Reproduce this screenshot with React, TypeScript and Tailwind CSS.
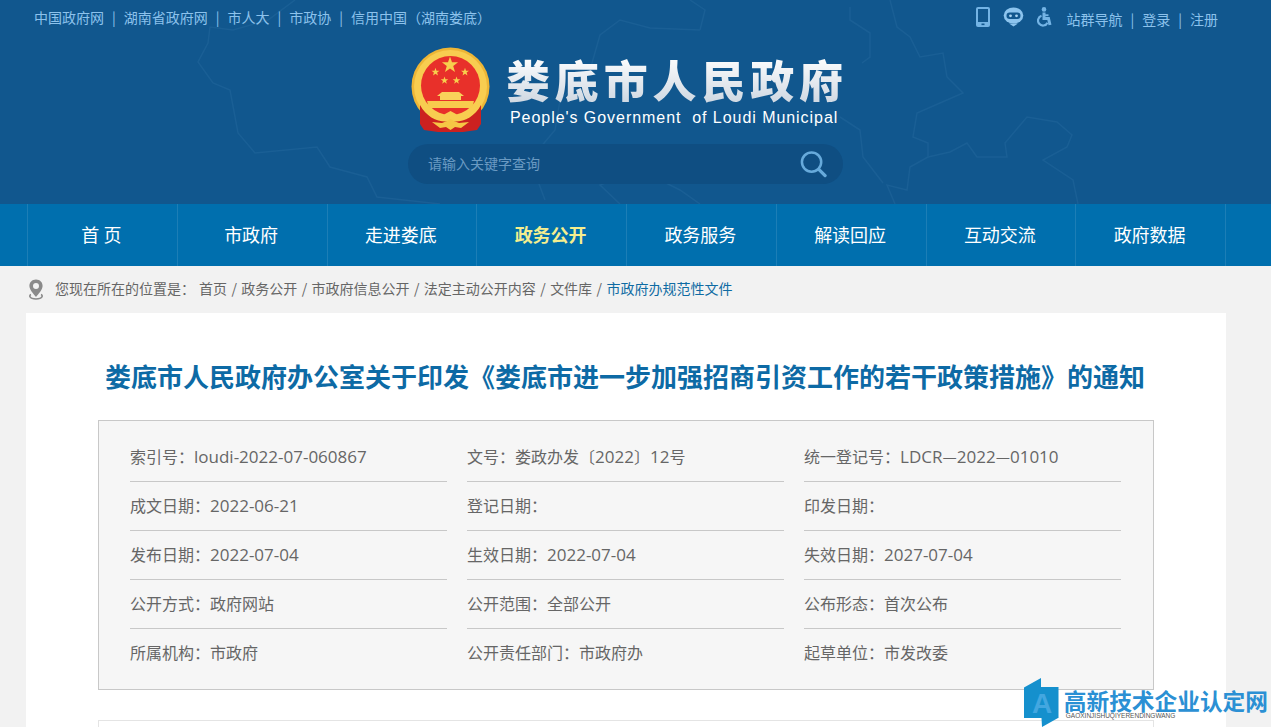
import React from 'react';

const cjk = { fontFamily: '"Noto Sans CJK SC", "Noto Sans", sans-serif' };

const navItems = ['首 页', '市政府', '走进娄底', '政务公开', '政务服务', '解读回应', '互动交流', '政府数据'];

const crumbs = ['首页', '政务公开', '市政府信息公开', '法定主动公开内容', '文件库'];

const leftLinks = ['中国政府网', '湖南省政府网', '市人大', '市政协', '信用中国（湖南娄底）'];
const rightLinks = ['站群导航', '登录', '注册'];

const infoRows = [
  ['索引号：loudi-2022-07-060867', '文号：娄政办发〔2022〕12号', '统一登记号：LDCR—2022—01010'],
  ['成文日期：2022-06-21', '登记日期：', '印发日期：'],
  ['发布日期：2022-07-04', '生效日期：2022-07-04', '失效日期：2027-07-04'],
  ['公开方式：政府网站', '公开范围：全部公开', '公布形态：首次公布'],
  ['所属机构：市政府', '公开责任部门：市政府办', '起草单位：市发改委'],
];

function Star({ x, y, r, fill = '#f7cf4d' }: { x: number; y: number; r: number; fill?: string }) {
  const points = Array.from({ length: 10 }, (_, i) => {
    const radius = i % 2 === 0 ? r : r * 0.4;
    const angle = (Math.PI / 5) * i - Math.PI / 2;
    return `${x + radius * Math.cos(angle)},${y + radius * Math.sin(angle)}`;
  }).join(' ');
  return <polygon points={points} fill={fill} />;
}

function Emblem() {
  return (
    <svg width="80" height="85" viewBox="0 0 80 85" className="shrink-0">
      <circle cx="39.5" cy="39.5" r="39" fill="#eeb636" />
      <circle cx="39.5" cy="39.5" r="36.5" fill="#f8cd50" />
      <circle cx="39.5" cy="38.5" r="29.5" fill="#e8302a" />
      <Star x={39} y={18} r={8.5} />
      <Star x={24.5} y={25} r={4.2} />
      <Star x={54} y={25} r={4.2} />
      <Star x={33.5} y={33.5} r={4} />
      <Star x={45.5} y={33.5} r={4} />
      <path d="M31 45 L48 45 L53 49 L50 49 L50 53 L29 53 L29 49 L26 49 Z" fill="#f9d25a" />
      <path d="M16 54 L63 54 L61 61 L18 61 Z" fill="#f8cb4d" />
      <path d="M9 58 C16 71 28 76 39.5 74 C51 76 63 71 70 58 L70 77 L66 83 L52 85 L27 85 L13 83 L9 77 Z" fill="#cc2120" />
      <path d="M29 71 L34 67 L39.5 64 L45 67 L50 71 L45 73 L39.5 71 L34 73 Z" fill="#f8cd50" />
      <path d="M21 75 L31 76 L36 74 L39.5 72 L43 74 L48 76 L58 75 L50 81 L44 80 L39.5 83 L35 80 L29 81 Z" fill="#f6c645" />
    </svg>
  );
}

function MapLines() {
  return (
    <svg className="absolute inset-0 pointer-events-none" width="1271" height="204" viewBox="0 0 1271 204" fill="none" stroke="#1a5f95" strokeWidth="1.5">
      <path d="M295 0 L268 20 L233 30 L210 27 L208 43 L198 62 L213 83 L230 90 L238 133 L255 153 L317 147 L330 167 L367 177 L377 197 L440 204" />
      <path d="M700 30 L650 28 L620 20 L600 35 L590 70 L560 100 L555 130 L530 160 L545 200" />
      <path d="M700 30 L705 10 L690 0" />
      <path d="M620 204 L600 185 L640 170 L680 190 L700 204" />
      <path d="M890 0 L897 27 L910 37 L920 57 L943 53 L947 77 L963 93 L940 103 L917 113 L913 137 L928 143 L928 157 L910 167 L907 190 L887 185 L895 204" />
      <path d="M928 157 L950 152 L967 143 L977 157 L1007 157 L1005 143 L1027 117 L1057 122 L1072 135 L1067 147 L1043 160 L1073 180 L1078 204" />
      <path d="M850 7 L850 20 L870 33 L870 57 L862 63" />
      <path d="M840 117 L860 130 L863 157 L883 183" />
    </svg>
  );
}

function PhoneIcon() {
  return (
    <svg width="14" height="20" viewBox="0 0 14 20">
      <rect width="14" height="20" rx="2" fill="#74b4e5" />
      <rect x="2" y="2" width="10" height="13" fill="#11578e" />
      <rect x="5.5" y="16.5" width="3" height="1.6" fill="#11578e" />
    </svg>
  );
}

function RobotIcon() {
  return (
    <svg width="21" height="20" viewBox="0 0 21 20">
      <ellipse cx="10.5" cy="8.5" rx="9.8" ry="8" fill="#8cc4ee" />
      <rect x="3.5" y="5.5" width="14" height="6.5" rx="3.2" fill="#11578e" />
      <circle cx="7.5" cy="8.8" r="1.4" fill="#a9d4f3" />
      <circle cx="13.5" cy="8.8" r="1.4" fill="#a9d4f3" />
      <path d="M6 16.5 L15 16.5 L10.5 19.5 Z" fill="#8cc4ee" />
    </svg>
  );
}

function WheelchairIcon() {
  return (
    <svg width="15" height="20" viewBox="0 0 15 20" fill="none" stroke="#74b4e5">
      <circle cx="7" cy="2.4" r="2.3" fill="#74b4e5" stroke="none" />
      <path d="M7 5.5 V11.5 H11.5 L13 18" strokeWidth="3" />
      <path d="M7 8.2 H11.5" strokeWidth="1.8" />
      <path d="M4.5 8.8 A5 5 0 1 0 10.5 15.8" strokeWidth="2.2" />
    </svg>
  );
}

function PinIcon() {
  return (
    <svg width="16" height="21" viewBox="0 0 16 21" fill="none">
      <path d="M3 15.5 C1 16.2 0.8 19.8 8 20 C15.2 19.8 15 16.2 13 15.5" stroke="#8a8a8a" strokeWidth="1.6" />
      <path fillRule="evenodd" d="M8 0.5 C12 0.5 14.6 3.4 14.6 7 C14.6 10.5 10.5 15 8 18 C5.5 15 1.4 10.5 1.4 7 C1.4 3.4 4 0.5 8 0.5 Z M8 4 A3 3 0 1 0 8 10 A3 3 0 1 0 8 4 Z" fill="#8a8a8a" />
    </svg>
  );
}

function Badge() {
  return (
    <div className="absolute right-[3px] bottom-0 flex h-[49px] items-end">
      <svg width="35" height="49" viewBox="0 0 35 49" className="mr-[5px]">
        <path d="M0 9.5 L17 0 L17 9 L34.5 9 L34.5 40 L34 40 L18 49 L17.5 40 L0 40 Z" fill="#1590cd" />
        <text x="18" y="35" textAnchor="middle" fontSize="28" fontWeight="700" fontFamily="Liberation Sans, sans-serif" fill="#43a7e0">
          A
        </text>
      </svg>
      <div className="mb-[7px] flex flex-col">
        <span className="text-[22.7px] leading-[20px] font-bold whitespace-nowrap text-[#2b90d4]">高新技术企业认定网</span>
        <span className="mt-[1px] ml-[2px] text-[6.5px] leading-[8px] whitespace-nowrap text-[#555] font-['Liberation_Sans',sans-serif]">
          GAOXINJISHUQIYERENDINGWANG
        </span>
      </div>
    </div>
  );
}

// 数字和英文用另一种字体，宽度才对得上
function InfoText({ text }: { text: string }) {
  const parts = text.split(/([A-Za-z0-9\-]+)/);
  return (
    <>
      {parts.map((part, i) =>
        i % 2 === 1 ? (
          <span key={i} className="text-[17px] font-['Open_Sans',sans-serif]">
            {part}
          </span>
        ) : (
          <span key={i}>{part}</span>
        ),
      )}
    </>
  );
}

function LinkRow({ links }: { links: string[] }) {
  return (
    <>
      {links.map((link, i) => (
        <React.Fragment key={link}>
          {i > 0 && <span className="w-[19.75px] text-center">|</span>}
          <span>{link}</span>
        </React.Fragment>
      ))}
    </>
  );
}

export default function App() {
  return (
    <div className="relative h-[727px] w-[1271px] overflow-hidden bg-[#f2f2f2]" style={cjk}>
      <header className="relative h-[204px] bg-[#11578e]">
        <MapLines />
        <div className="relative ml-[26px] w-[1200px]">
          <div className="flex h-[36px] items-center justify-between text-[14px] text-[#8cc2ec]">
            <div className="flex items-center pb-[2px] pl-[8px]">
              <LinkRow links={leftLinks} />
            </div>
            <div className="flex items-center pr-[8px]">
              <div className="mr-[15px] -mt-[3px] flex items-center gap-[13px]">
                <PhoneIcon />
                <RobotIcon />
                <WheelchairIcon />
              </div>
              <div className="flex items-center pt-[2px]">
                <LinkRow links={rightLinks} />
              </div>
            </div>
          </div>
          <div className="mt-[11px] ml-[385px] flex items-start gap-[16px]">
            <Emblem />
            <div className="flex flex-col pt-[8px]">
              <h1 className="-ml-[1px] bg-linear-to-b from-white to-[#cfd8e2] bg-clip-text text-[44px] leading-[48px] font-black tracking-[4.85px] whitespace-nowrap text-transparent">
                娄底市人民政府
              </h1>
              <p className="mt-[5px] pl-[3px] text-[16px] leading-[20px] tracking-[0.95px] whitespace-pre text-white font-['Liberation_Sans',sans-serif]">
                People's Government  of Loudi Municipal
              </p>
            </div>
          </div>
          <div className="mt-[12px] ml-[382px] flex h-[40px] w-[435px] items-center justify-between rounded-full bg-[#0f4e82] pr-[16px] pl-[20px]">
            <span className="pb-[1px] text-[14px] text-[#6a9ac2]">请输入关键字查询</span>
            <svg width="27" height="28" viewBox="0 0 28 28" fill="none" stroke="#67aadb">
              <circle cx="12" cy="12" r="10" strokeWidth="2.6" />
              <path d="M19.5 19.5 L26 26" strokeWidth="3.4" strokeLinecap="round" />
            </svg>
          </div>
        </div>
      </header>

      <nav className="h-[62px] bg-[#006fae]">
        <ul className="ml-[27px] grid h-full w-[1199px] grid-cols-8 border-r border-[#1c7eb6]">
          {navItems.map((item) => (
            <li
              key={item}
              className={
                item === '政务公开'
                  ? 'flex items-center justify-center border-l border-[#1c7eb6] pr-[2px] pb-[1px] text-[18px] font-bold text-[#f4ee8e]'
                  : 'flex items-center justify-center border-l border-[#1c7eb6] pr-[2px] pb-[1px] text-[18px] text-white'
              }
            >
              {item}
            </li>
          ))}
        </ul>
      </nav>

      <div className="flex h-[47px] items-center pl-[28px] text-[14px] text-[#666]">
        <PinIcon />
        <div className="flex items-center pb-[3px]">
          <span className="ml-[11px] w-[144px]">您现在所在的位置是：</span>
          <div className="flex items-center gap-[4.4px]">
            {crumbs.map((crumb) => (
              <React.Fragment key={crumb}>
                <span>{crumb}</span>
                <span>/</span>
              </React.Fragment>
            ))}
            <span className="text-[#0f6ba3]">市政府办规范性文件</span>
          </div>
        </div>
      </div>

      <main className="ml-[26px] w-[1200px] bg-white px-[72px]">
        <h2 className="pt-[43px] pr-[2px] pb-[24px] text-center text-[26px] leading-[40px] font-bold whitespace-nowrap text-[#0d6aa5]">
          娄底市人民政府办公室关于印发《娄底市进一步加强招商引资工作的若干政策措施》的通知
        </h2>
        <section className="h-[270px] border border-[#c8c8c8] bg-[#f6f6f6] px-[31px] pt-[12px]">
          <div className="flex flex-col">
            {infoRows.map((row, i) => (
              <div key={row[0]} className="grid grid-cols-[317px_317px_317px] gap-x-[20px]">
                {row.map((cell) => (
                  <div
                    key={cell}
                    className={
                      i === infoRows.length - 1
                        ? 'h-[49px] text-[16px] leading-[46px] whitespace-nowrap text-[#666]'
                        : 'h-[49px] border-b border-[#c8c8c8] text-[16px] leading-[46px] whitespace-nowrap text-[#666]'
                    }
                  >
                    <InfoText text={cell} />
                  </div>
                ))}
              </div>
            ))}
          </div>
        </section>
        <div className="mt-[30px] h-[100px] border border-[#e4e4e4]" />
      </main>

      <Badge />
    </div>
  );
}
